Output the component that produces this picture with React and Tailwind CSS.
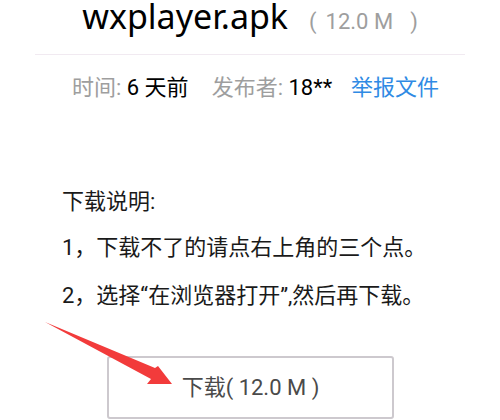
import React from 'react';

const FONT = "font-['Roboto','Noto_Sans_CJK_SC',sans-serif]";

function Arrow() {
  return (
    <svg className="absolute left-0 top-0 pointer-events-none" width="500" height="420" viewBox="0 0 500 420">
      <polygon points="45,322 155,368 158,366 172,384 147,384 151,379" fill="#f23b3b" />
    </svg>
  );
}

export default function App() {
  return (
    <div className={`relative w-[500px] h-[420px] overflow-hidden bg-white ${FONT}`}>
      {/* title */}
      <div className="flex justify-center items-baseline pt-[2px]">
        <span className="font-['Noto_Sans','Roboto',sans-serif] text-[34px] leading-[29px] text-black">wxplayer.apk</span>
        <span className="ml-[21px] text-[22px] leading-[22px] text-[#9e9e9e]">
          (<span className="ml-[9px]">12.0 M</span><span className="ml-[17px]">)</span>
        </span>
      </div>

      <div className="mx-[35px] mt-[21px] h-px bg-[#f1eaf1]" />

      {/* meta */}
      <div className="flex items-baseline pl-[72px] mt-[18px] text-[22px] leading-[30px] whitespace-pre">
        <span className="text-[#9e9e9e]">时间: </span>
        <span className="text-black">6 天前</span>
        <span className="ml-[23px] text-[#9e9e9e]">发布者: </span>
        <span className="text-black">18**</span>
        <span className="ml-[19px] text-[#2f8ae4]">举报文件</span>
      </div>

      {/* instructions */}
      <div className="mt-[76px] pl-[62px] text-[22px] leading-[46px] text-[#1a1a1a]">
        <p>下载说明:</p>
        <p>1，下载不了的请点右上角的三个点。</p>
        <p className="mt-[2px]">2，选择“在浏览器打开”,然后再下载。</p>
      </div>

      {/* download button */}
      <button
        type="button"
        className="ml-[107px] mt-[37px] w-[287px] h-[63px] flex items-center justify-center rounded-[3px] border-2 border-[#cdc9ce] bg-white text-[22px] text-[#4a4a4a]"
      >
        下载( 12.0 M )
      </button>

      <Arrow />
    </div>
  );
}
